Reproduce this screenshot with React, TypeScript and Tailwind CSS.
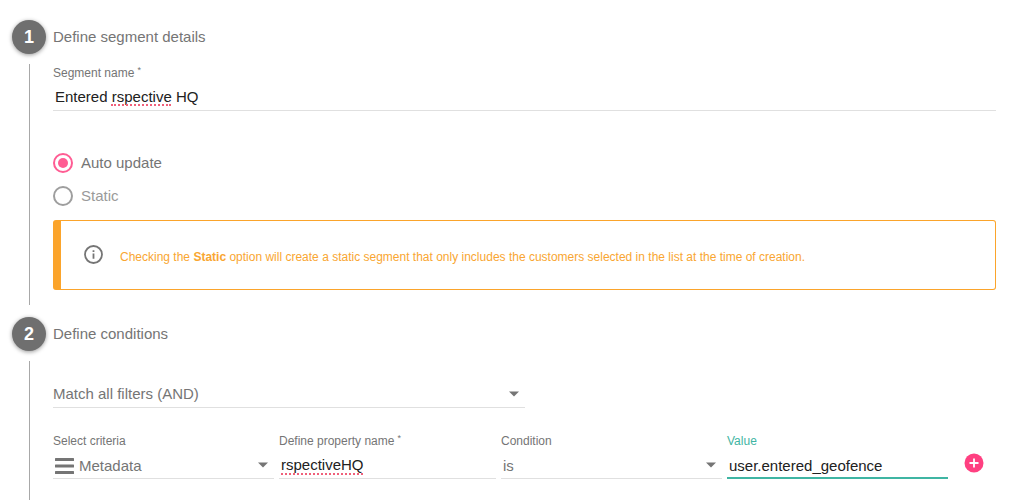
import { useState } from "react";
import type { ReactNode } from "react";

type StepProps = {
  number: number;
  title: string;
  className?: string;
  children: ReactNode;
};

function Step({ number, title, className = "", children }: StepProps) {
  return (
    <section className={`flex gap-[7px] ${className}`}>
      <div className="flex shrink-0 flex-col items-center gap-[10px]">
        <span className="flex size-[34px] items-center justify-center rounded-full bg-[#6f6f6f] text-lg font-bold text-white shadow-[0_1px_4px_rgba(0,0,0,0.4)]">
          {number}
        </span>
        <span className="w-px flex-1 bg-[#a8a8a8]" />
      </div>
      <div className="min-w-0 flex-1">
        <h2 className="flex h-[34px] items-center text-[15px]">{title}</h2>
        {children}
      </div>
    </section>
  );
}

function Required() {
  return <sup className="ml-[3px] text-[9px] leading-none">*</sup>;
}

function Caret() {
  return (
    <svg
      className="pointer-events-none absolute top-1/2 right-[6px] -mt-[4px]"
      width="10"
      height="6"
      viewBox="0 0 10 6"
      fill="#757575"
      aria-hidden="true"
    >
      <path d="M0 0.5h10L5 5.5z" />
    </svg>
  );
}

// red dots under a word the spell checker does not know
function SpellingMark({ className }: { className: string }) {
  return (
    <span
      className={`pointer-events-none absolute border-b-2 border-dotted border-[#f0607a] ${className}`}
    />
  );
}

export default function App() {
  const [name, setName] = useState("Entered rspective HQ");
  const [mode, setMode] = useState("auto");
  const [property, setProperty] = useState("rspectiveHQ");
  const [value, setValue] = useState("user.entered_geofence");

  return (
    <main className="flex min-h-screen flex-col bg-white pt-5 pr-10 pl-3 font-['Liberation_Sans',Arial,sans-serif] text-[#757575]">
      <Step number={1} title="Define segment details">
        <label htmlFor="name" className="mt-[11px] block text-xs leading-4 font-medium">
          Segment name
          <Required />
        </label>
        <div className="relative mt-[3px]">
          <input
            id="name"
            className="block h-[27px] w-full border-b border-[#e0e0e0] px-[2px] pb-[2px] text-[15px] text-[#212121] outline-none"
            value={name}
            spellCheck={false}
            onChange={(e) => setName(e.target.value)}
          />
          <SpellingMark className="bottom-[5px] left-[58px] w-[60px]" />
        </div>

        <div className="mt-[42px] flex flex-col gap-[13px] text-[15px] leading-5">
          <label className="flex items-center gap-2">
            <input
              type="radio"
              name="mode"
              className="flex size-5 appearance-none items-center justify-center rounded-full border-2 border-[#9e9e9e] checked:border-[#ff5c93] checked:before:size-[10px] checked:before:rounded-full checked:before:bg-[#ff5c93] checked:before:content-['']"
              checked={mode === "auto"}
              onChange={() => setMode("auto")}
            />
            Auto update
          </label>
          <label className="flex items-center gap-2 text-[#9a9a9a]">
            <input
              type="radio"
              name="mode"
              className="flex size-5 appearance-none items-center justify-center rounded-full border-2 border-[#9e9e9e] checked:border-[#ff5c93] checked:before:size-[10px] checked:before:rounded-full checked:before:bg-[#ff5c93] checked:before:content-['']"
              checked={mode === "static"}
              onChange={() => setMode("static")}
            />
            Static
          </label>
        </div>

        <div className="mt-[14px] flex items-center gap-4 rounded-[3px] border border-l-8 border-[#fba42b] py-[22px] pr-4 pl-[22px] text-xs leading-5 text-[#f9a631]">
          <svg className="shrink-0" width="21" height="21" viewBox="0 0 21 21" aria-hidden="true">
            <circle cx="10.5" cy="9.5" r="8.5" fill="none" stroke="#757575" strokeWidth="1.8" />
            <path d="M9.6 8.6h1.8v5.2H9.6zM9.6 5.2h1.8V7H9.6z" fill="#757575" />
          </svg>
          <p className="pt-1">
            Checking the <b>Static</b> option will create a static segment that only includes the
            customers selected in the list at the time of creation.
          </p>
        </div>
        <div className="h-[15px]" />
      </Step>

      <Step number={2} title="Define conditions" className="mt-3 flex-1">
        <div className="relative mt-[31px] w-1/2">
          <select
            aria-label="Filter matching"
            className="block h-[26px] w-full appearance-none border-b border-[#e0e0e0] text-[15px] outline-none"
            defaultValue="and"
          >
            <option value="and">Match all filters (AND)</option>
            <option value="or">Match any filter (OR)</option>
          </select>
          <Caret />
        </div>

        <div className="mt-[25px] flex items-start text-xs leading-4">
          <div className="grid flex-1 grid-cols-[221fr_217fr_221fr_221fr] gap-[5px]">
            <div>
              <label htmlFor="criteria">Select criteria</label>
              <div className="relative mt-1">
                <svg
                  className="pointer-events-none absolute top-[5px] left-[2px]"
                  width="19"
                  height="16"
                  viewBox="0 0 19 16"
                  fill="#757575"
                  aria-hidden="true"
                >
                  <rect width="19" height="3" rx="0.5" />
                  <rect y="6.5" width="19" height="3" rx="0.5" />
                  <rect y="13" width="19" height="3" rx="0.5" />
                </svg>
                <select
                  id="criteria"
                  className="block h-[26px] w-full appearance-none border-b border-[#e0e0e0] pl-[26px] text-[15px] outline-none"
                  defaultValue="metadata"
                >
                  <option value="metadata">Metadata</option>
                </select>
                <Caret />
              </div>
            </div>

            <div>
              <label htmlFor="property">
                Define property name
                <Required />
              </label>
              <div className="relative mt-1">
                <input
                  id="property"
                  className="block h-[26px] w-full border-b border-[#e0e0e0] px-[2px] pb-[2px] text-[15px] text-[#212121] outline-none"
                  value={property}
                  spellCheck={false}
                  onChange={(e) => setProperty(e.target.value)}
                />
                <SpellingMark className="bottom-[4px] left-[2px] w-[82px]" />
              </div>
            </div>

            <div>
              <label htmlFor="condition">Condition</label>
              <div className="relative mt-1">
                <select
                  id="condition"
                  className="block h-[26px] w-full appearance-none border-b border-[#e0e0e0] px-[2px] text-[15px] outline-none"
                  defaultValue="is"
                >
                  <option value="is">is</option>
                  <option value="is-not">is not</option>
                </select>
                <Caret />
              </div>
            </div>

            <div>
              <label htmlFor="value" className="text-[#3fb5a3]">
                Value
              </label>
              <input
                id="value"
                className="mt-1 block h-[26px] w-full border-b-2 border-[#3fb5a3] px-[2px] text-[15px] text-[#212121] outline-none"
                value={value}
                spellCheck={false}
                onChange={(e) => setValue(e.target.value)}
              />
            </div>
          </div>

          <button type="button" aria-label="Add filter" className="mt-5 mr-3 ml-4">
            <svg width="20" height="20" viewBox="0 0 20 20">
              <circle cx="10" cy="10" r="9.5" fill="#ff4081" />
              <path d="M10 5.5v9M5.5 10h9" stroke="#fff" strokeWidth="1.8" />
            </svg>
          </button>
        </div>
      </Step>
    </main>
  );
}
